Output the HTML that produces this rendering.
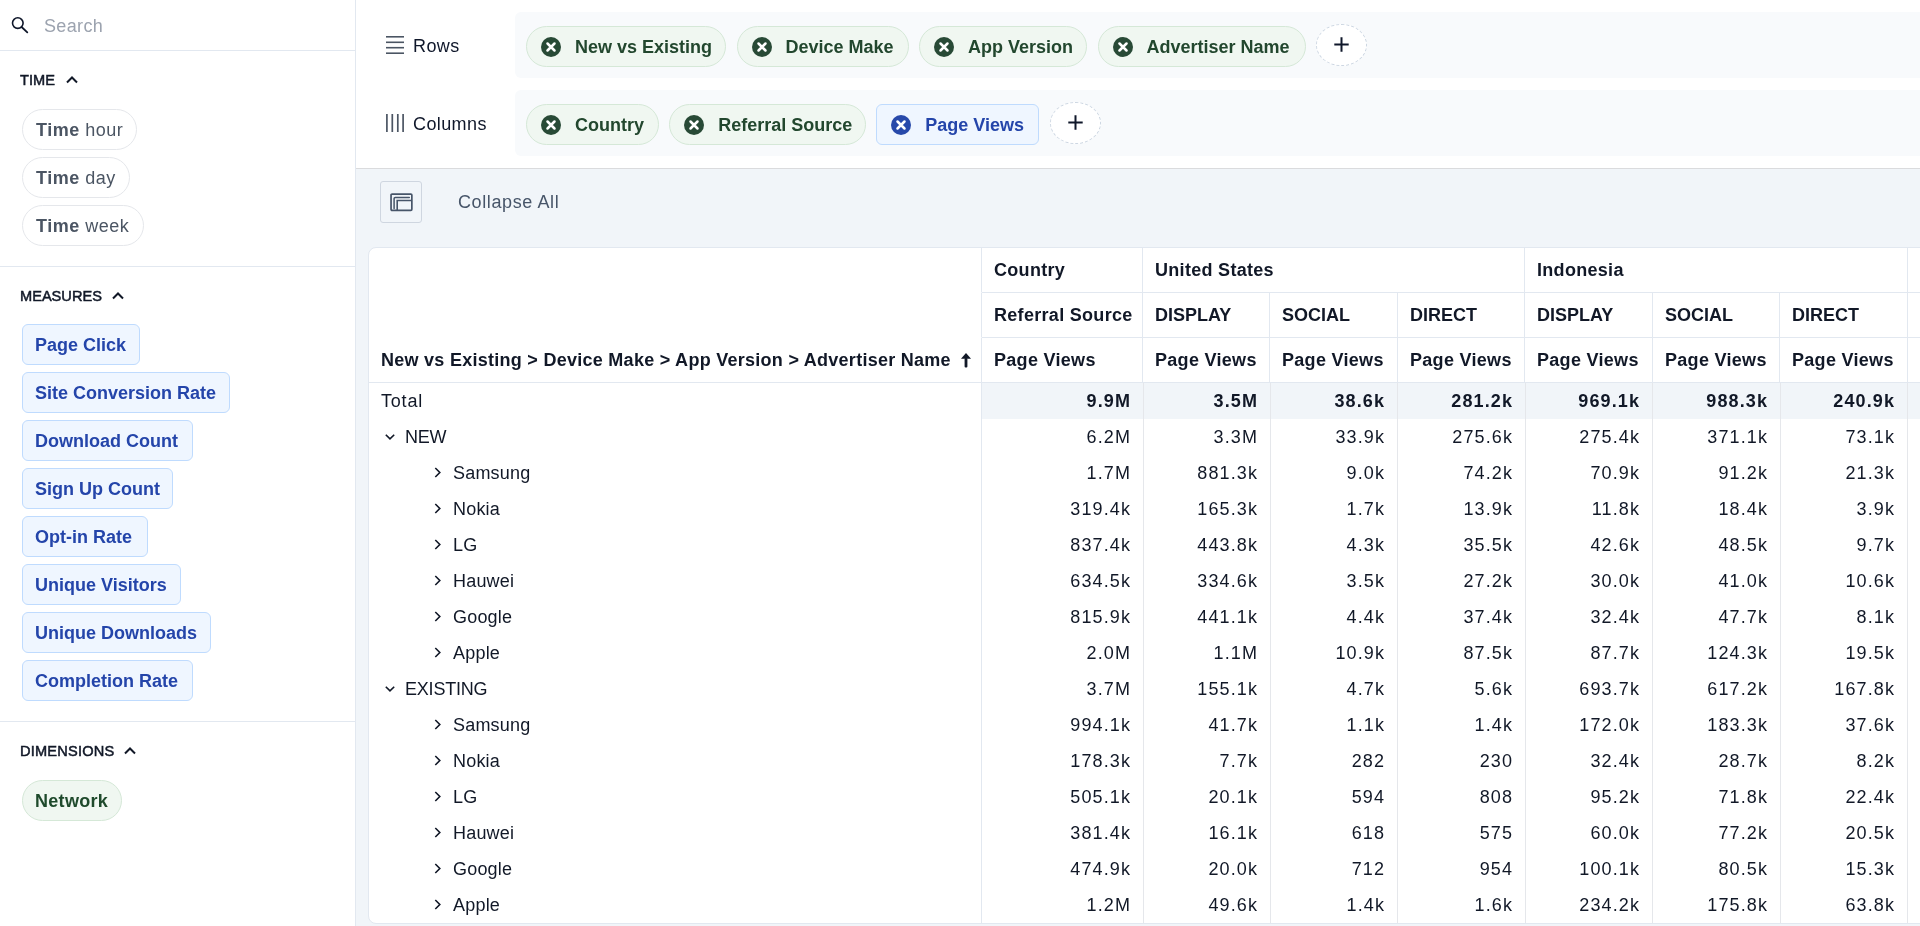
<!DOCTYPE html>
<html><head><meta charset="utf-8">
<style>
*{box-sizing:border-box;margin:0;padding:0}
html,body{width:1920px;height:926px;overflow:hidden;background:#fff;font-family:"Liberation Sans",sans-serif;color:#111827}
.abs{position:absolute}
#side{position:absolute;left:0;top:0;width:356px;height:926px;border-right:1px solid #e2e8f0;background:#fff;will-change:transform}
#search{position:absolute;left:0;top:0;width:355px;height:51px;border-bottom:1px solid #e2e8f0}
#search .ph{position:absolute;left:44px;top:16px;font-size:18px;line-height:20px;color:#9ca3af;letter-spacing:0.35px}
.sec{position:absolute;left:0;width:355px}
.sech{position:absolute;left:20px;font-size:14.6px;font-weight:400;line-height:20px;color:#111827;letter-spacing:0px;-webkit-text-stroke:0.5px #111827}
.sech svg{position:absolute;top:0}
.hr{position:absolute;left:0;width:355px;height:1px;background:#e2e8f0}
.tpill{position:absolute;left:22px;height:41px;border:1px solid #e5e7eb;border-radius:21px;padding:0 0 0 13px;font-size:18px;line-height:40px;color:#4b5563;white-space:nowrap;background:#fff;letter-spacing:0.5px}
.tpill b{font-weight:700}
.mpill{position:absolute;left:22px;height:41px;border:1px solid #bfdbfe;border-radius:6px;padding:0 12px;font-size:18px;font-weight:700;line-height:40px;color:#2445aa;white-space:nowrap;background:#eff6ff}
.gpill{position:absolute;left:22px;height:41px;border:1px solid #d5e8d7;border-radius:21px;padding:0 12px;font-size:18px;font-weight:700;line-height:40px;color:#1f4a2c;white-space:nowrap;background:#f0f7f1;letter-spacing:0.3px}

#main{position:absolute;left:356px;top:0;width:1564px;height:926px;background:#f1f5f9;will-change:transform;overflow:hidden}
#hdr{position:absolute;left:0;top:0;width:1564px;height:169px;background:#fff;border-bottom:1px solid #dadbdd}
.lbl{position:absolute;left:57px;font-size:18px;line-height:22px;color:#0f172a;letter-spacing:0.4px}
.zone{position:absolute;left:159px;width:1405px;height:66px;background:#f8fafc;border-radius:6px 0 0 6px}
.chips{position:absolute;left:0;top:0;white-space:nowrap}
.chip{height:41px;border:1px solid #d5e8d7;background:#f0f7f1;border-radius:21px;padding:0 0 0 14px;display:flex;align-items:center;font-size:18px;font-weight:700;color:#22472e;position:absolute;top:14px;padding-top:2px}
.chip .x{width:20px;height:20px;border-radius:50%;background:#284a36;margin-right:14px;position:relative;top:-1px;flex:none}
.chip .x svg{position:absolute;left:0;top:0}
.chip.blue{border-color:#bfdbfe;background:#eff6ff;color:#2445aa;border-radius:6px}
.chip.blue .x{background:#2749aa}
.plus{width:51px;height:42px;border:1px dashed #cbd5e1;border-radius:50%;background:#fff;position:absolute;top:12px}
.plus svg{position:absolute;left:17px;top:12px}

#tbtn{position:absolute;left:24px;top:181px;width:42px;height:42px;border:1px solid #cfd6e0;border-radius:3px}
#tbtn svg{position:absolute;left:9px;top:11px}
#collapse{position:absolute;left:102px;top:192px;font-size:18px;line-height:20px;color:#475569;letter-spacing:0.6px}

#tbl{position:absolute;left:12px;top:247px;width:1600px;height:677px;background:#fff;border:1px solid #e2e8f0;border-radius:8px;overflow:hidden}
.row{position:absolute;left:0;display:flex;white-space:nowrap}
.c{flex:none;border-right:1px solid #e2e8f0;padding:0 12px;font-size:18px;overflow:hidden}
.hrow{height:45px;line-height:44px;font-weight:700;color:#111827}
.hc{height:45px;border-bottom:1px solid #e2e8f0}
.brow .c{border-right-color:#e5e7eb;height:36px;line-height:36px;text-align:right;color:#111827;letter-spacing:1.1px;padding-right:12px}
.brow .c.f{border-right-color:#e2e8f0;text-align:left;letter-spacing:0.2px;position:relative}
.tot .c{background:#f1f5f9;font-weight:700}
.tot .c.f{background:#fff;font-weight:400}
.chev{position:absolute}
</style></head>
<body>
<div id="side">
  <div id="search">
    <svg class="abs" style="left:9px;top:15px" width="22" height="22" viewBox="0 0 22 22"><circle cx="8.8" cy="8.1" r="5.3" fill="none" stroke="#0f172a" stroke-width="1.6"/><line x1="12.6" y1="12" x2="18.3" y2="17.3" stroke="#0f172a" stroke-width="1.8" stroke-linecap="round"/></svg>
    <div class="ph">Search</div>
  </div>
  <!-- TIME -->
  <div class="sech" style="top:70px">TIME<svg style="left:46px;top:6px" width="12" height="8" viewBox="0 0 12 8"><path d="M1 6.5 L6 1.5 L11 6.5" fill="none" stroke="#111827" stroke-width="2"/></svg></div>
  <div class="tpill" style="top:109px;width:114.5px"><b>Time</b> hour</div>
  <div class="tpill" style="top:157px;width:108px"><b>Time</b> day</div>
  <div class="tpill" style="top:205px;width:122px"><b>Time</b> week</div>
  <div class="hr" style="top:266px"></div>
  <!-- MEASURES -->
  <div class="sech" style="top:286px">MEASURES<svg style="left:92px;top:6px" width="12" height="8" viewBox="0 0 12 8"><path d="M1 6.5 L6 1.5 L11 6.5" fill="none" stroke="#111827" stroke-width="2"/></svg></div>
  <div class="mpill" style="top:324px;width:118px">Page Click</div>
  <div class="mpill" style="top:372px;width:208px">Site Conversion Rate</div>
  <div class="mpill" style="top:420px;width:171px">Download Count</div>
  <div class="mpill" style="top:468px;width:151px">Sign Up Count</div>
  <div class="mpill" style="top:516px;width:126px">Opt-in Rate</div>
  <div class="mpill" style="top:564px;width:159px">Unique Visitors</div>
  <div class="mpill" style="top:612px;width:189px">Unique Downloads</div>
  <div class="mpill" style="top:660px;width:171px">Completion Rate</div>
  <div class="hr" style="top:721px"></div>
  <!-- DIMENSIONS -->
  <div class="sech" style="top:741px;letter-spacing:0.2px">DIMENSIONS<svg style="left:104px;top:6px" width="12" height="8" viewBox="0 0 12 8"><path d="M1 6.5 L6 1.5 L11 6.5" fill="none" stroke="#111827" stroke-width="2"/></svg></div>
  <div class="gpill" style="top:780px;width:100px">Network</div>
</div>

<div id="main">
  <div id="hdr">
    <svg class="abs" style="left:30px;top:36px" width="18" height="18" viewBox="0 0 18 18"><g stroke="#4b5563" stroke-width="1.6"><line x1="0" y1="0.8" x2="18" y2="0.8"/><line x1="0" y1="6.3" x2="18" y2="6.3"/><line x1="0" y1="11.7" x2="18" y2="11.7"/><line x1="0" y1="17.2" x2="18" y2="17.2"/></g></svg>
    <div class="lbl" style="top:35px">Rows</div>
    <div class="zone" style="top:12px">
      <div class="chips">
        <div class="chip" style="left:11px;width:200px"><span class="x"><svg width="20" height="20" viewBox="0 0 20 20"><path d="M6.5 6.5 L13.5 13.5 M13.5 6.5 L6.5 13.5" stroke="#fff" stroke-width="2.5" stroke-linecap="round"/></svg></span>New vs Existing</div>
        <div class="chip" style="left:221.5px;width:172.5px"><span class="x"><svg width="20" height="20" viewBox="0 0 20 20"><path d="M6.5 6.5 L13.5 13.5 M13.5 6.5 L6.5 13.5" stroke="#fff" stroke-width="2.5" stroke-linecap="round"/></svg></span>Device Make</div>
        <div class="chip" style="left:404px;width:168px"><span class="x"><svg width="20" height="20" viewBox="0 0 20 20"><path d="M6.5 6.5 L13.5 13.5 M13.5 6.5 L6.5 13.5" stroke="#fff" stroke-width="2.5" stroke-linecap="round"/></svg></span>App Version</div>
        <div class="chip" style="left:582.5px;width:208.5px"><span class="x"><svg width="20" height="20" viewBox="0 0 20 20"><path d="M6.5 6.5 L13.5 13.5 M13.5 6.5 L6.5 13.5" stroke="#fff" stroke-width="2.5" stroke-linecap="round"/></svg></span>Advertiser Name</div>
        <div class="plus" style="left:801px"><svg width="15" height="15" viewBox="0 0 15 15"><path d="M7.5 0.3 V14.7 M0.3 7.5 H14.7" stroke="#0f172a" stroke-width="2"/></svg></div>
      </div>
    </div>
    <svg class="abs" style="left:30px;top:114px" width="18" height="18" viewBox="0 0 18 18"><g stroke="#4b5563" stroke-width="1.7"><line x1="0.9" y1="0" x2="0.9" y2="18"/><line x1="6.3" y1="0" x2="6.3" y2="18"/><line x1="11.8" y1="0" x2="11.8" y2="18"/><line x1="17.1" y1="0" x2="17.1" y2="18"/></g></svg>
    <div class="lbl" style="top:113px">Columns</div>
    <div class="zone" style="top:90px">
      <div class="chips">
        <div class="chip" style="left:11px;width:132.5px"><span class="x"><svg width="20" height="20" viewBox="0 0 20 20"><path d="M6.5 6.5 L13.5 13.5 M13.5 6.5 L6.5 13.5" stroke="#fff" stroke-width="2.5" stroke-linecap="round"/></svg></span>Country</div>
        <div class="chip" style="left:154.2px;width:196.5px"><span class="x"><svg width="20" height="20" viewBox="0 0 20 20"><path d="M6.5 6.5 L13.5 13.5 M13.5 6.5 L6.5 13.5" stroke="#fff" stroke-width="2.5" stroke-linecap="round"/></svg></span>Referral Source</div>
        <div class="chip blue" style="left:361.3px;width:162.5px"><span class="x"><svg width="20" height="20" viewBox="0 0 20 20"><path d="M6.5 6.5 L13.5 13.5 M13.5 6.5 L6.5 13.5" stroke="#fff" stroke-width="2.5" stroke-linecap="round"/></svg></span>Page Views</div>
        <div class="plus" style="left:535px"><svg width="15" height="15" viewBox="0 0 15 15"><path d="M7.5 0.3 V14.7 M0.3 7.5 H14.7" stroke="#0f172a" stroke-width="2"/></svg></div>
      </div>
    </div>
  </div>

  <div id="tbtn"><svg width="24" height="20" viewBox="0 0 24 20"><rect x="1.05" y="1.05" width="20.8" height="16.3" rx="1" fill="none" stroke="#475569" stroke-width="1.7"/><path d="M4.1 15.4 V5.6 Q4.1 4.4 5.3 4.4 H19.3" fill="none" stroke="#475569" stroke-width="1.5" stroke-linecap="round"/><path d="M7.2 17.4 V7.5 H21.85" fill="none" stroke="#475569" stroke-width="1.6"/></svg></div>
  <div id="collapse">Collapse All</div>

  <div id="tbl">
<div class="row hrow" style="top:0"><div class="c hc" style="width:613px;border-bottom-color:#fff"></div><div class="c hc" style="width:161px;letter-spacing:0.3px">Country</div><div class="c hc" style="width:382px;letter-spacing:0.3px">United States</div><div class="c hc" style="width:383px;letter-spacing:0.3px">Indonesia</div><div class="c hc" style="width:255px"></div></div>
<div class="row hrow" style="top:45px"><div class="c hc" style="width:613px;border-bottom-color:#fff"></div><div class="c hc" style="width:161px;letter-spacing:0.3px">Referral Source</div><div class="c hc" style="width:127px">DISPLAY</div><div class="c hc" style="width:128px">SOCIAL</div><div class="c hc" style="width:127px">DIRECT</div><div class="c hc" style="width:128px">DISPLAY</div><div class="c hc" style="width:127px">SOCIAL</div><div class="c hc" style="width:128px">DIRECT</div><div class="c hc" style="width:127px"></div><div class="c hc" style="width:128px"></div></div>
<div class="row hrow" style="top:90px"><div class="c hc" style="width:613px;position:relative;letter-spacing:0.27px">New vs Existing &gt; Device Make &gt; App Version &gt; Advertiser Name<svg style="position:absolute;left:592px;top:15px" width="10" height="15" viewBox="0 0 10 15"><path d="M5 0 L10 5.8 L0 5.8 Z" fill="#111827"/><rect x="3.6" y="5" width="2.8" height="9.6" rx="1" fill="#111827"/></svg></div><div class="c hc" style="width:161px;letter-spacing:0.3px">Page Views</div><div class="c hc" style="width:127px;letter-spacing:0.3px">Page Views</div><div class="c hc" style="width:128px;letter-spacing:0.3px">Page Views</div><div class="c hc" style="width:127px;letter-spacing:0.3px">Page Views</div><div class="c hc" style="width:128px;letter-spacing:0.3px">Page Views</div><div class="c hc" style="width:127px;letter-spacing:0.3px">Page Views</div><div class="c hc" style="width:128px;letter-spacing:0.3px">Page Views</div><div class="c hc" style="width:127px"></div><div class="c hc" style="width:128px"></div></div>
<div class="row brow tot" style="top:135px"><div class="c f" style="width:613px;letter-spacing:0.8px">Total</div><div class="c" style="width:162px">9.9M</div><div class="c" style="width:127px">3.5M</div><div class="c" style="width:127px">38.6k</div><div class="c" style="width:128px">281.2k</div><div class="c" style="width:127px">969.1k</div><div class="c" style="width:128px">988.3k</div><div class="c" style="width:127px">240.9k</div><div class="c" style="width:127px"></div><div class="c" style="width:128px"></div></div>
<div class="row brow" style="top:171px"><div class="c f" style="width:613px;padding-left:36px;letter-spacing:-0.2px"><svg class="chev" style="left:15px;top:15px" width="12" height="7" viewBox="0 0 12 7"><path d="M1.8 0.7 L6 4.8 L10.2 0.7" fill="none" stroke="#111827" stroke-width="1.6"/></svg>NEW</div><div class="c" style="width:162px">6.2M</div><div class="c" style="width:127px">3.3M</div><div class="c" style="width:127px">33.9k</div><div class="c" style="width:128px">275.6k</div><div class="c" style="width:127px">275.4k</div><div class="c" style="width:128px">371.1k</div><div class="c" style="width:127px">73.1k</div><div class="c" style="width:127px"></div><div class="c" style="width:128px"></div></div>
<div class="row brow" style="top:207px"><div class="c f" style="width:613px;padding-left:84px"><svg class="chev" style="left:65px;top:12px" width="7" height="12" viewBox="0 0 7 12"><path d="M1.3 1 L5.8 5.5 L1.3 10" fill="none" stroke="#111827" stroke-width="1.6"/></svg>Samsung</div><div class="c" style="width:162px">1.7M</div><div class="c" style="width:127px">881.3k</div><div class="c" style="width:127px">9.0k</div><div class="c" style="width:128px">74.2k</div><div class="c" style="width:127px">70.9k</div><div class="c" style="width:128px">91.2k</div><div class="c" style="width:127px">21.3k</div><div class="c" style="width:127px"></div><div class="c" style="width:128px"></div></div>
<div class="row brow" style="top:243px"><div class="c f" style="width:613px;padding-left:84px"><svg class="chev" style="left:65px;top:12px" width="7" height="12" viewBox="0 0 7 12"><path d="M1.3 1 L5.8 5.5 L1.3 10" fill="none" stroke="#111827" stroke-width="1.6"/></svg>Nokia</div><div class="c" style="width:162px">319.4k</div><div class="c" style="width:127px">165.3k</div><div class="c" style="width:127px">1.7k</div><div class="c" style="width:128px">13.9k</div><div class="c" style="width:127px">11.8k</div><div class="c" style="width:128px">18.4k</div><div class="c" style="width:127px">3.9k</div><div class="c" style="width:127px"></div><div class="c" style="width:128px"></div></div>
<div class="row brow" style="top:279px"><div class="c f" style="width:613px;padding-left:84px"><svg class="chev" style="left:65px;top:12px" width="7" height="12" viewBox="0 0 7 12"><path d="M1.3 1 L5.8 5.5 L1.3 10" fill="none" stroke="#111827" stroke-width="1.6"/></svg>LG</div><div class="c" style="width:162px">837.4k</div><div class="c" style="width:127px">443.8k</div><div class="c" style="width:127px">4.3k</div><div class="c" style="width:128px">35.5k</div><div class="c" style="width:127px">42.6k</div><div class="c" style="width:128px">48.5k</div><div class="c" style="width:127px">9.7k</div><div class="c" style="width:127px"></div><div class="c" style="width:128px"></div></div>
<div class="row brow" style="top:315px"><div class="c f" style="width:613px;padding-left:84px"><svg class="chev" style="left:65px;top:12px" width="7" height="12" viewBox="0 0 7 12"><path d="M1.3 1 L5.8 5.5 L1.3 10" fill="none" stroke="#111827" stroke-width="1.6"/></svg>Hauwei</div><div class="c" style="width:162px">634.5k</div><div class="c" style="width:127px">334.6k</div><div class="c" style="width:127px">3.5k</div><div class="c" style="width:128px">27.2k</div><div class="c" style="width:127px">30.0k</div><div class="c" style="width:128px">41.0k</div><div class="c" style="width:127px">10.6k</div><div class="c" style="width:127px"></div><div class="c" style="width:128px"></div></div>
<div class="row brow" style="top:351px"><div class="c f" style="width:613px;padding-left:84px"><svg class="chev" style="left:65px;top:12px" width="7" height="12" viewBox="0 0 7 12"><path d="M1.3 1 L5.8 5.5 L1.3 10" fill="none" stroke="#111827" stroke-width="1.6"/></svg>Google</div><div class="c" style="width:162px">815.9k</div><div class="c" style="width:127px">441.1k</div><div class="c" style="width:127px">4.4k</div><div class="c" style="width:128px">37.4k</div><div class="c" style="width:127px">32.4k</div><div class="c" style="width:128px">47.7k</div><div class="c" style="width:127px">8.1k</div><div class="c" style="width:127px"></div><div class="c" style="width:128px"></div></div>
<div class="row brow" style="top:387px"><div class="c f" style="width:613px;padding-left:84px"><svg class="chev" style="left:65px;top:12px" width="7" height="12" viewBox="0 0 7 12"><path d="M1.3 1 L5.8 5.5 L1.3 10" fill="none" stroke="#111827" stroke-width="1.6"/></svg>Apple</div><div class="c" style="width:162px">2.0M</div><div class="c" style="width:127px">1.1M</div><div class="c" style="width:127px">10.9k</div><div class="c" style="width:128px">87.5k</div><div class="c" style="width:127px">87.7k</div><div class="c" style="width:128px">124.3k</div><div class="c" style="width:127px">19.5k</div><div class="c" style="width:127px"></div><div class="c" style="width:128px"></div></div>
<div class="row brow" style="top:423px"><div class="c f" style="width:613px;padding-left:36px;letter-spacing:-0.2px"><svg class="chev" style="left:15px;top:15px" width="12" height="7" viewBox="0 0 12 7"><path d="M1.8 0.7 L6 4.8 L10.2 0.7" fill="none" stroke="#111827" stroke-width="1.6"/></svg>EXISTING</div><div class="c" style="width:162px">3.7M</div><div class="c" style="width:127px">155.1k</div><div class="c" style="width:127px">4.7k</div><div class="c" style="width:128px">5.6k</div><div class="c" style="width:127px">693.7k</div><div class="c" style="width:128px">617.2k</div><div class="c" style="width:127px">167.8k</div><div class="c" style="width:127px"></div><div class="c" style="width:128px"></div></div>
<div class="row brow" style="top:459px"><div class="c f" style="width:613px;padding-left:84px"><svg class="chev" style="left:65px;top:12px" width="7" height="12" viewBox="0 0 7 12"><path d="M1.3 1 L5.8 5.5 L1.3 10" fill="none" stroke="#111827" stroke-width="1.6"/></svg>Samsung</div><div class="c" style="width:162px">994.1k</div><div class="c" style="width:127px">41.7k</div><div class="c" style="width:127px">1.1k</div><div class="c" style="width:128px">1.4k</div><div class="c" style="width:127px">172.0k</div><div class="c" style="width:128px">183.3k</div><div class="c" style="width:127px">37.6k</div><div class="c" style="width:127px"></div><div class="c" style="width:128px"></div></div>
<div class="row brow" style="top:495px"><div class="c f" style="width:613px;padding-left:84px"><svg class="chev" style="left:65px;top:12px" width="7" height="12" viewBox="0 0 7 12"><path d="M1.3 1 L5.8 5.5 L1.3 10" fill="none" stroke="#111827" stroke-width="1.6"/></svg>Nokia</div><div class="c" style="width:162px">178.3k</div><div class="c" style="width:127px">7.7k</div><div class="c" style="width:127px">282</div><div class="c" style="width:128px">230</div><div class="c" style="width:127px">32.4k</div><div class="c" style="width:128px">28.7k</div><div class="c" style="width:127px">8.2k</div><div class="c" style="width:127px"></div><div class="c" style="width:128px"></div></div>
<div class="row brow" style="top:531px"><div class="c f" style="width:613px;padding-left:84px"><svg class="chev" style="left:65px;top:12px" width="7" height="12" viewBox="0 0 7 12"><path d="M1.3 1 L5.8 5.5 L1.3 10" fill="none" stroke="#111827" stroke-width="1.6"/></svg>LG</div><div class="c" style="width:162px">505.1k</div><div class="c" style="width:127px">20.1k</div><div class="c" style="width:127px">594</div><div class="c" style="width:128px">808</div><div class="c" style="width:127px">95.2k</div><div class="c" style="width:128px">71.8k</div><div class="c" style="width:127px">22.4k</div><div class="c" style="width:127px"></div><div class="c" style="width:128px"></div></div>
<div class="row brow" style="top:567px"><div class="c f" style="width:613px;padding-left:84px"><svg class="chev" style="left:65px;top:12px" width="7" height="12" viewBox="0 0 7 12"><path d="M1.3 1 L5.8 5.5 L1.3 10" fill="none" stroke="#111827" stroke-width="1.6"/></svg>Hauwei</div><div class="c" style="width:162px">381.4k</div><div class="c" style="width:127px">16.1k</div><div class="c" style="width:127px">618</div><div class="c" style="width:128px">575</div><div class="c" style="width:127px">60.0k</div><div class="c" style="width:128px">77.2k</div><div class="c" style="width:127px">20.5k</div><div class="c" style="width:127px"></div><div class="c" style="width:128px"></div></div>
<div class="row brow" style="top:603px"><div class="c f" style="width:613px;padding-left:84px"><svg class="chev" style="left:65px;top:12px" width="7" height="12" viewBox="0 0 7 12"><path d="M1.3 1 L5.8 5.5 L1.3 10" fill="none" stroke="#111827" stroke-width="1.6"/></svg>Google</div><div class="c" style="width:162px">474.9k</div><div class="c" style="width:127px">20.0k</div><div class="c" style="width:127px">712</div><div class="c" style="width:128px">954</div><div class="c" style="width:127px">100.1k</div><div class="c" style="width:128px">80.5k</div><div class="c" style="width:127px">15.3k</div><div class="c" style="width:127px"></div><div class="c" style="width:128px"></div></div>
<div class="row brow" style="top:639px"><div class="c f" style="width:613px;padding-left:84px"><svg class="chev" style="left:65px;top:12px" width="7" height="12" viewBox="0 0 7 12"><path d="M1.3 1 L5.8 5.5 L1.3 10" fill="none" stroke="#111827" stroke-width="1.6"/></svg>Apple</div><div class="c" style="width:162px">1.2M</div><div class="c" style="width:127px">49.6k</div><div class="c" style="width:127px">1.4k</div><div class="c" style="width:128px">1.6k</div><div class="c" style="width:127px">234.2k</div><div class="c" style="width:128px">175.8k</div><div class="c" style="width:127px">63.8k</div><div class="c" style="width:127px"></div><div class="c" style="width:128px"></div></div>
  </div>
</div>
</body></html>
